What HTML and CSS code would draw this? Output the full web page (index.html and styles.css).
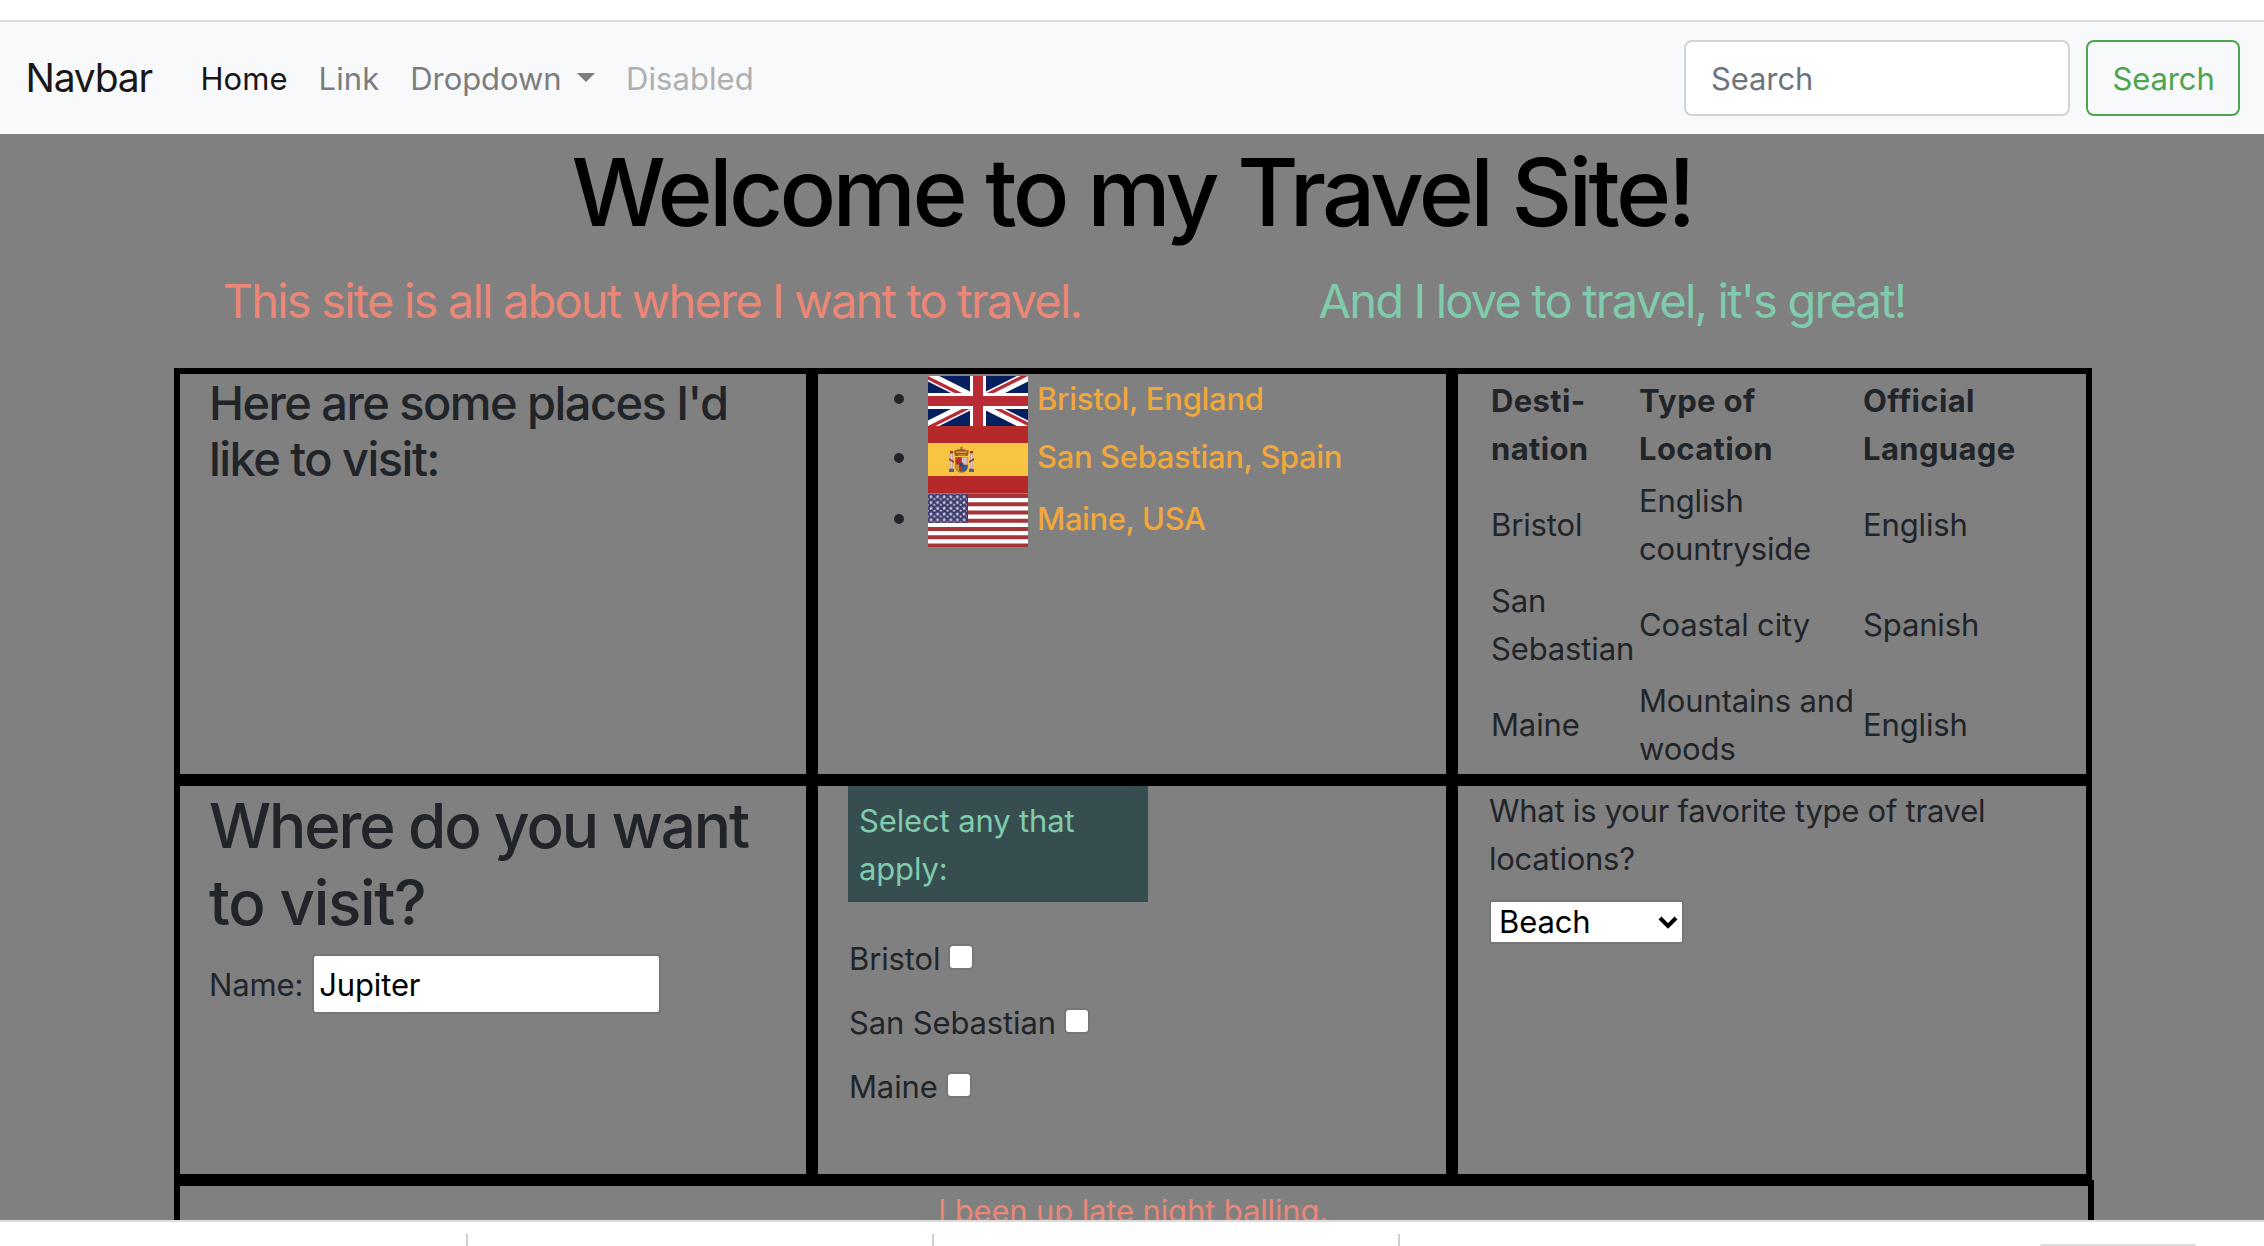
FILE: index.html
```
<!DOCTYPE html>
<html lang="en">
<head>
<meta charset="utf-8">
<title>Travel Site</title>
<link rel="stylesheet" href="styles.css">
</head>
<body>
<div class="window">
  <div class="strip"></div>
  <nav class="navbar">
    <a class="brand">Navbar</a>
    <div class="links">
      <a class="active">Home</a>
      <a>Link</a>
      <a class="dropdown">Dropdown<span class="caret"></span></a>
      <a class="disabled">Disabled</a>
    </div>
    <form class="search">
      <input class="search-input" type="text" placeholder="Search">
      <button class="search-button" type="button">Search</button>
    </form>
  </nav>
  <main class="page">
    <h1>Welcome to my Travel Site!</h1>
    <div class="intro">
      <p class="salmon">This site is all about where I want to travel.</p>
      <p class="mint">And I love to travel, it's great!</p>
    </div>
    <div class="grid">
      <section class="cell">
        <h3>Here are some places I'd<br>like to visit:</h3>
      </section>
      <section class="cell">
        <ul class="places">
          <li class="uk">
            <svg width="100" height="50" viewBox="0 0 60 30">
              <clipPath id="half"><path d="M30 15h30v15zv15H0zH0V0zV0h30z"/></clipPath>
              <path fill="#06205f" d="M0 0h60v30H0z"/>
              <path stroke="#fff" stroke-width="6" d="M0 0l60 30M60 0L0 30"/>
              <path stroke="#b92b35" stroke-width="4" clip-path="url(#half)" d="M0 0l60 30M60 0L0 30"/>
              <path stroke="#fff" stroke-width="9.6" d="M30 0v30M0 15h60"/>
              <path stroke="#b92b35" stroke-width="6" d="M30 0v30M0 15h60"/>
            </svg>
            <span>Bristol, England</span>
          </li>
          <li class="spain">
            <svg width="100" height="67" viewBox="0 0 100 67">
              <path fill="#b52929" d="M0 0h100v67H0z"/>
              <path fill="#f8c442" d="M0 17h100v33H0z"/>
              <path fill="#b08a78" d="M22 27h3v16h-3zM42 27h3v16h-3z"/>
              <path fill="#d9d3cf" d="M22.500 28h2v14h-2zM42.500 28h2v14h-2z"/>
              <path fill="#a8322b" d="M21 32l5 3v2l-5-3zM46 32l-5 3v2l5-3zM22 25h3v2h-3zM42 25h3v2h-3z"/>
              <path fill="#49648f" d="M21 43h5v3h-5zM41 43h5v3h-5z"/>
              <path fill="#b9794b" d="M27 31h13v10q0 5-6.500 6Q27 46 27 41z"/>
              <path fill="#b5312b" d="M28 31.500h5.500v7H28z"/>
              <path fill="#d6bdc4" d="M34 31.500h5.500v7H34z"/>
              <path fill="#c69a39" d="M28 39h3v6l-3-3z"/>
              <path fill="#aa3a2c" d="M31 39h3v7l-3-1z"/>
              <path fill="#3c5687" d="M34 39h5.500v2q0 4-5.500 5z"/>
              <circle cx="33.500" cy="38.500" r="2" fill="#30477e"/>
              <path fill="#a3522e" d="M27 30l-1-5q3-2 7-2t8 2l-1.500 5z"/>
              <path fill="#d7a23a" d="M28 25.500h11v1.500H28zM30 28.500h8v1h-8z"/>
              <path stroke="#8c6a35" d="M33.500 20.500v4M32 22h3"/>
            </svg>
            <span>San Sebastian, Spain</span>
          </li>
          <li class="usa">
            <svg width="100" height="53.500" viewBox="0 0 100 52" preserveAspectRatio="none">
              <defs>
                <pattern id="stars" x="1" y="0.600" width="6.600" height="5.600" patternUnits="userSpaceOnUse">
                  <path fill="#dcdce8" d="M2 0l.6 1.300 1.400.1-1 1 .3 1.400L2 3.100l-1.300.7.3-1.400-1-1 1.400-.1zM5.300 3l.4.9 1 .1-.7.7.2.9-.9-.4-.9.4.2-.9-.7-.7 1-.1z"/>
                </pattern>
              </defs>
              <path fill="#fff" d="M0 0h100v52H0z"/>
              <path stroke="#a4343a" stroke-width="4" d="M0 2h100M0 10h100M0 18h100M0 26h100M0 34h100M0 42h100M0 50h100"/>
              <path fill="#3c3b6e" d="M0 0h40v28H0z"/>
              <path fill="url(#stars)" d="M0 0h39v27.500H0z"/>
            </svg>
            <span>Maine, USA</span>
          </li>
        </ul>
      </section>
      <section class="cell">
        <table>
          <tr><th class="c1">Desti-<br>nation</th><th class="c2">Type of<br>Location</th><th>Official<br>Language</th></tr>
          <tr><td>Bristol</td><td>English<br>countryside</td><td>English</td></tr>
          <tr><td>San<br>Sebastian</td><td>Coastal city</td><td>Spanish</td></tr>
          <tr><td>Maine</td><td>Mountains and<br>woods</td><td>English</td></tr>
        </table>
      </section>
      <section class="cell">
        <h2>Where do you want<br><span class="tight">to visit?</span></h2>
        <div class="name-row"><label for="name">Name:</label><input id="name" class="name-input" type="text" value="Jupiter"></div>
      </section>
      <section class="cell">
        <p class="callout">Select any that<br>apply:</p>
        <div class="checks">
          <label>Bristol<input type="checkbox"></label>
          <label>San Sebastian<input type="checkbox"></label>
          <label>Maine<input type="checkbox"></label>
        </div>
      </section>
      <section class="cell">
        <p class="question">What is your favorite type of travel<br>locations?</p>
        <div class="select-box">
          <select><option>Beach</option></select>
          <svg class="chevron" width="20" height="13" viewBox="0 0 20 13"><path d="M2 2l8 8 8-8" fill="none" stroke="#000" stroke-width="4"/></svg>
        </div>
      </section>
    </div>
    <footer class="salmon">I been up late night balling.</footer>
  </main>
  <div class="shelf"><i></i><i></i><i></i><b></b></div>
</div>
</body>
</html>
```
FILE: styles.css
```
* { box-sizing: border-box; }
body { margin: 0; background: #fff; overflow: hidden; }
.window {
  width: 2264px; height: 1246px; overflow: hidden;
  display: flex; flex-direction: column;
  font: 400 31px/48px Inter, "Liberation Sans", sans-serif;
  letter-spacing: -0.0045em; color: #212529;
}
h1, h2, h3, p, ul { margin: 0; padding: 0; font-weight: 550; }
p { font-weight: 400; }
input, select, button { font: inherit; letter-spacing: inherit; margin: 0; }

.strip { height: 22px; flex: none; border-bottom: 2px solid #dadce0; }
.navbar {
  height: 112px; flex: none; display: flex; align-items: center;
  padding: 0 24px 0 25.5px; background: #f8f9fb; letter-spacing: 0.002em;
}
.brand { font-size: 39px; letter-spacing: -0.031em; color: #181818; width: 175px; }
.links { display: flex; gap: 31px; padding-top: 2px; color: #7c7d7e; }
.links .active { color: #161617; }
.links .disabled { color: #aeafb0; }
.dropdown { display: flex; align-items: center; letter-spacing: -0.002em; }
.caret {
  margin: 0 0 4px 15.5px; border: 9.6px solid transparent;
  border-top-color: currentColor; border-bottom: 0;
}
.search { margin-left: auto; display: flex; gap: 16px; }
.search-input {
  width: 386px; height: 76px; padding: 0 25px; border: 2px solid #ced4da;
  border-radius: 8px; background: #fff; outline: 0; letter-spacing: -0.0035em;
}
.search-input::placeholder { color: #6c757d; opacity: 1; }
.search-button {
  width: 154px; height: 76px; padding: 2px 0 0 1px; border: 2px solid #4fa44e;
  border-radius: 8px; background: transparent; color: #4fa44e; letter-spacing: -0.0035em;
}

.page { height: 1086px; flex: none; overflow: hidden; background: #808080; }
h1 {
  height: 115px; padding-top: 1px;
  font-size: 94px; line-height: 115px; letter-spacing: -0.0392em;
  text-align: center; color: #000;
}
.intro {
  display: grid; grid-template-columns: 960px 960px; margin: 16px 0 31px 172px;
  font-size: 47px; line-height: 72px; letter-spacing: -0.0386em; text-align: center;
}
.salmon { color: #eb8777; }
.mint { color: #80cbac; }

.grid {
  display: grid; grid-template-columns: 638px 640px 640px; width: 1918px;
  grid-template-rows: 412px 400px; margin-left: 174px; background: #000;
}
.cell { border: 6px solid #000; padding: 0 30px; background: #808080; }
.cell:nth-child(3n+1) { padding-left: 29px; padding-right: 0; }
h3 { font-size: 47px; line-height: 56px; letter-spacing: -0.033em; padding-top: 1px; }
h2 { height: 152px; padding-top: 1px; font-size: 62px; line-height: 77px; letter-spacing: -0.0338em; }
h2 .tight { letter-spacing: -0.0219em; }

.places { list-style: none; padding: 2px 0 0 45.5px; color: #f2a73b; }
.places li { display: flex; align-items: center; }
.places li::before {
  content: ""; width: 10px; height: 10px; margin: 0 24.5px 4px 0;
  border-radius: 5px; background: #212529;
}
.places svg { display: block; flex: none; margin-right: 9px; }
.places span { margin-bottom: 4px; }
.uk { height: 50px; letter-spacing: -0.009em; }
.spain { height: 67.5px; letter-spacing: -0.0115em; }
.spain span { margin-bottom: 6px; }
.usa { height: 54px; letter-spacing: -0.013em; }

table { border-collapse: collapse; margin-left: 1px; }
td, th { padding: 3px 2px 1px; height: 100px; text-align: left; }
th { font-weight: 700; letter-spacing: 0.0115em; }
.c1 { width: 148px; }
.c2 { width: 224px; }

.name-row { display: flex; align-items: center; gap: 9px; padding-top: 16px; }
.name-row label { padding-top: 2px; }
.name-input {
  width: 349px; height: 60px; padding: 0 5px; border: 2px solid #767676;
  border-radius: 4px; background: #fff; color: #000; outline: 0;
}
.callout {
  width: 300px; height: 116px; padding: 11px 10px 9px 11px;
  background: #364e50; color: #80cbac;
}
.checks { display: flex; flex-direction: column; gap: 16px; padding: 33px 0 0 1px; }
.checks label { display: flex; align-items: center; }
.checks input {
  appearance: none; width: 26px; height: 26px; margin: 0 0 4px 8px;
  border: 2px solid #767676; border-radius: 5px; background: #fff;
}
.question { padding: 1px 0 0 1px; letter-spacing: -0.0082em; }
.select-box { position: relative; width: 195px; margin: 17px 0 0 1px; }
.select-box select {
  display: block; appearance: none; width: 195px; height: 44px; padding: 0 8px;
  line-height: 38px; border: 2px solid #767676; border-radius: 3px; background: #fff; color: #000;
}
.chevron { position: absolute; right: 6px; top: 16px; }

footer {
  width: 1920px; height: 80px; margin-left: 174px; padding: 1px 2px 0 0;
  border: 6px solid #000; text-align: center;
}

.shelf {
  height: 26px; flex: none; display: flex; align-items: flex-end;
  border-top: 2px solid #dadce0; background: #fff;
}
.shelf i { width: 2px; height: 12px; margin-left: 464px; background: #cfcfd1; }
.shelf i:first-child { margin-left: 466px; }
.shelf b { width: 156px; height: 2px; margin-left: 640px; background: #dadce0; border-radius: 2px 2px 0 0; }
```
